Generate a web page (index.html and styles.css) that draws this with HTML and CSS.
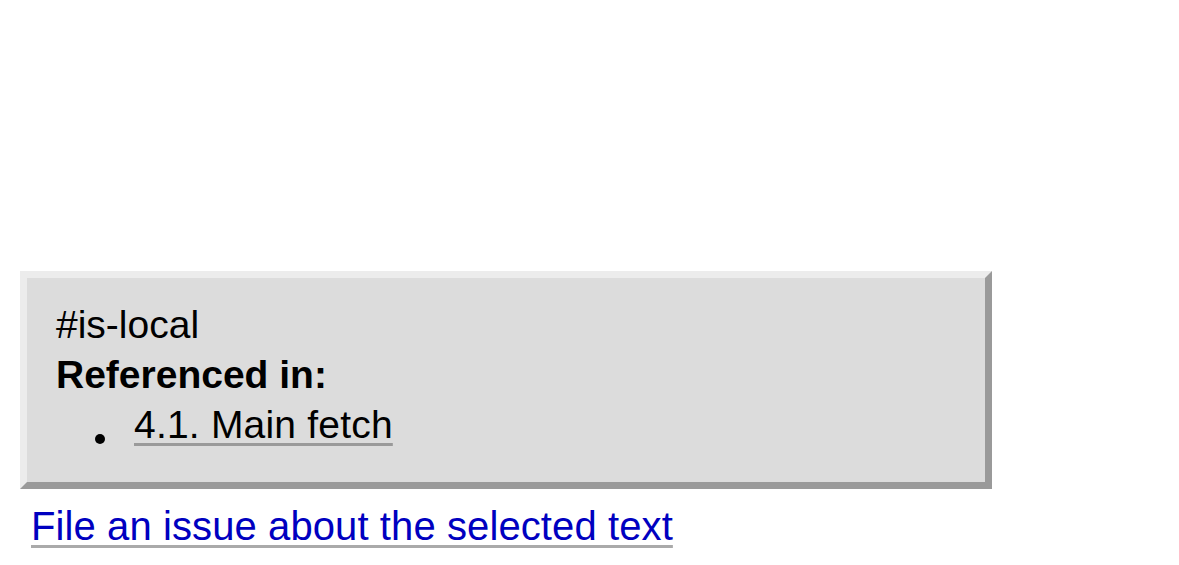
FILE: index.html
```html
<!DOCTYPE html>
<html lang="en">
<head>
<meta charset="utf-8">
<title>#is-local</title>
<link rel="stylesheet" href="styles.css">
</head>
<body>
  <div class="dfn-panel">
    <span class="dfn-id">#is-local</span>
    <b class="ref-title">Referenced in:</b>
    <ul class="ref-list">
      <li><a class="ref-link" href="#ref-for-is-local">4.1. Main fetch</a></li>
    </ul>
  </div>
  <a class="file-issue" href="#file-issue">File an issue about the selected text</a>
</body>
</html>
```

FILE: styles.css
```css
html, body {
  margin: 0;
  background: #ffffff;
}

body {
  padding: 271px 0 0 20px;
  font-family: "Liberation Sans", Arial, sans-serif;
  font-size: 39px;
  line-height: 50px;
  color: #000;
}

.dfn-panel {
  box-sizing: border-box;
  width: 972px;
  background: #dcdcdc;
  border-style: solid;
  border-width: 7px;
  border-color: #ececec #9a9a9a #9a9a9a #ececec;
  padding: 22px 29px 32px 29px;
}

.dfn-id,
.ref-title {
  display: block;
}

.ref-title {
  font-weight: bold;
}

.ref-list {
  list-style: none;
  margin: 0;
  padding: 0 0 0 78px;
}

.ref-list li {
  position: relative;
}

.ref-list li::before {
  content: "";
  position: absolute;
  left: -39px;
  top: 34px;
  width: 10px;
  height: 10px;
  border-radius: 50%;
  background: #000;
}

.ref-link {
  color: #000;
  text-decoration: underline;
  text-decoration-color: #9a9a9a;
  text-decoration-thickness: 3px;
  text-underline-offset: 5px;
  letter-spacing: 0.2px;
}

.file-issue {
  display: inline-block;
  margin-left: 11px;
  margin-top: 12px;
  font-size: 40px;
  color: #0000c0;
  text-decoration: underline;
  text-decoration-color: #aaaaaa;
  text-decoration-thickness: 3px;
  text-underline-offset: 5px;
  letter-spacing: 0.1px;
}
```
